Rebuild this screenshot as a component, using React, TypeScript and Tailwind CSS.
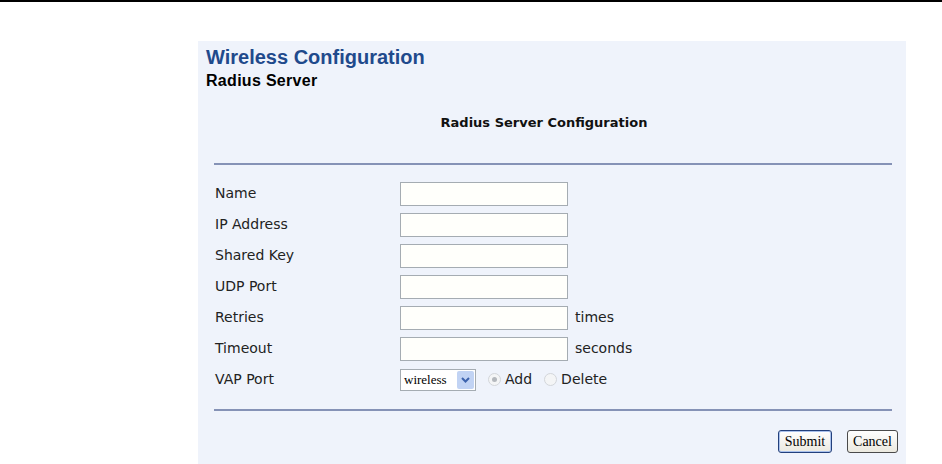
const labelFont = { fontFamily: '"DejaVu Sans", Verdana, sans-serif' };

type Row = { label: string; suffix?: string };

const rows: Row[] = [
  { label: "Name" },
  { label: "IP Address" },
  { label: "Shared Key" },
  { label: "UDP Port" },
  { label: "Retries", suffix: "times" },
  { label: "Timeout", suffix: "seconds" },
];

function TextField() {
  return (
    <input
      type="text"
      className="h-[24px] w-[168px] border border-[#a5acb2] bg-[#fffffb] px-1 text-[13px] outline-none"
    />
  );
}

function VapSelect() {
  return (
    <div className="flex h-[22px] w-[76px] items-center border border-[#a5acb2] bg-white">
      <span className="flex-1 pl-[3px] font-['Liberation_Serif',serif] text-[13px] leading-none text-black">
        wireless
      </span>
      <span className="mr-[1px] flex h-[18px] w-[17px] items-center justify-center rounded-[2px] bg-[#c1d3f4]">
        <svg width="9" height="6" viewBox="0 0 9 6">
          <path d="M1 1 L4.5 4.5 L8 1" fill="none" stroke="#3d63ad" strokeWidth="2" />
        </svg>
      </span>
    </div>
  );
}

function Radio({ checked, label }: { checked?: boolean; label: string }) {
  return (
    <span className="flex items-center">
      <span className="flex h-[13px] w-[13px] items-center justify-center rounded-full border border-[#d3d6da] bg-[#f4f5f6]">
        {checked && <span className="h-[5px] w-[5px] rounded-full bg-[#b4b8bd]" />}
      </span>
      <span className="ml-[4px] text-[14px] text-[#222]">{label}</span>
    </span>
  );
}

function Button({ label, primary }: { label: string; primary?: boolean }) {
  return (
    <button
      className={`h-[23px] rounded-[3px] border bg-gradient-to-b from-white to-[#ebe9df] font-['Liberation_Serif',serif] text-[14px] leading-none text-black ${
        primary ? "w-[54px] border-[#23407c] shadow-[inset_0_0_0_1px_#a9c1ec]" : "w-[51px] border-[#4a4a4a]"
      }`}
    >
      {label}
    </button>
  );
}

export default function App() {
  return (
    <div className="min-h-[464px] bg-white">
      <div className="h-[2px] w-full bg-black" />
      <div className="ml-[198px] mt-[39px] h-[423px] w-[708px] bg-[#eff3fb] pt-[5px]">
        <div className="pl-[8px] font-['Liberation_Sans',Arial,sans-serif] font-bold">
          <h1 className="text-[20px] leading-[23px] text-[#1f4a8c]">Wireless Configuration</h1>
          <h2 className="mt-[3px] text-[16px] leading-[18px] tracking-[0.3px] text-black">Radius Server</h2>
        </div>

        <div className="ml-[16px] mr-[14px]" style={labelFont}>
          <p className="mt-[25px] pr-[18px] text-center text-[13px] font-bold leading-[16px] text-[#111]">
            Radius Server Configuration
          </p>
          <div className="mt-[32px] h-[2px] bg-[#8592b6]" />

          <div className="mt-[13px] flex flex-col">
            {rows.map((row) => (
              <div key={row.label} className="flex h-[31px] items-center">
                <span className="w-[186px] pl-[1px] text-[14px] text-[#222]">{row.label}</span>
                <TextField />
                {row.suffix && <span className="ml-[7px] text-[14px] text-[#222]">{row.suffix}</span>}
              </div>
            ))}
            <div className="flex h-[31px] items-center">
              <span className="w-[186px] pl-[1px] text-[14px] text-[#222]">VAP Port</span>
              <VapSelect />
              <span className="ml-[12px] flex items-center gap-[12px]">
                <Radio checked label="Add" />
                <Radio label="Delete" />
              </span>
            </div>
          </div>

          <div className="mt-[14px] h-[2px] bg-[#8592b6]" />
        </div>

        <div className="mt-[19px] flex justify-end gap-[15px] pr-[8px]">
          <Button primary label="Submit" />
          <Button label="Cancel" />
        </div>
      </div>
    </div>
  );
}
